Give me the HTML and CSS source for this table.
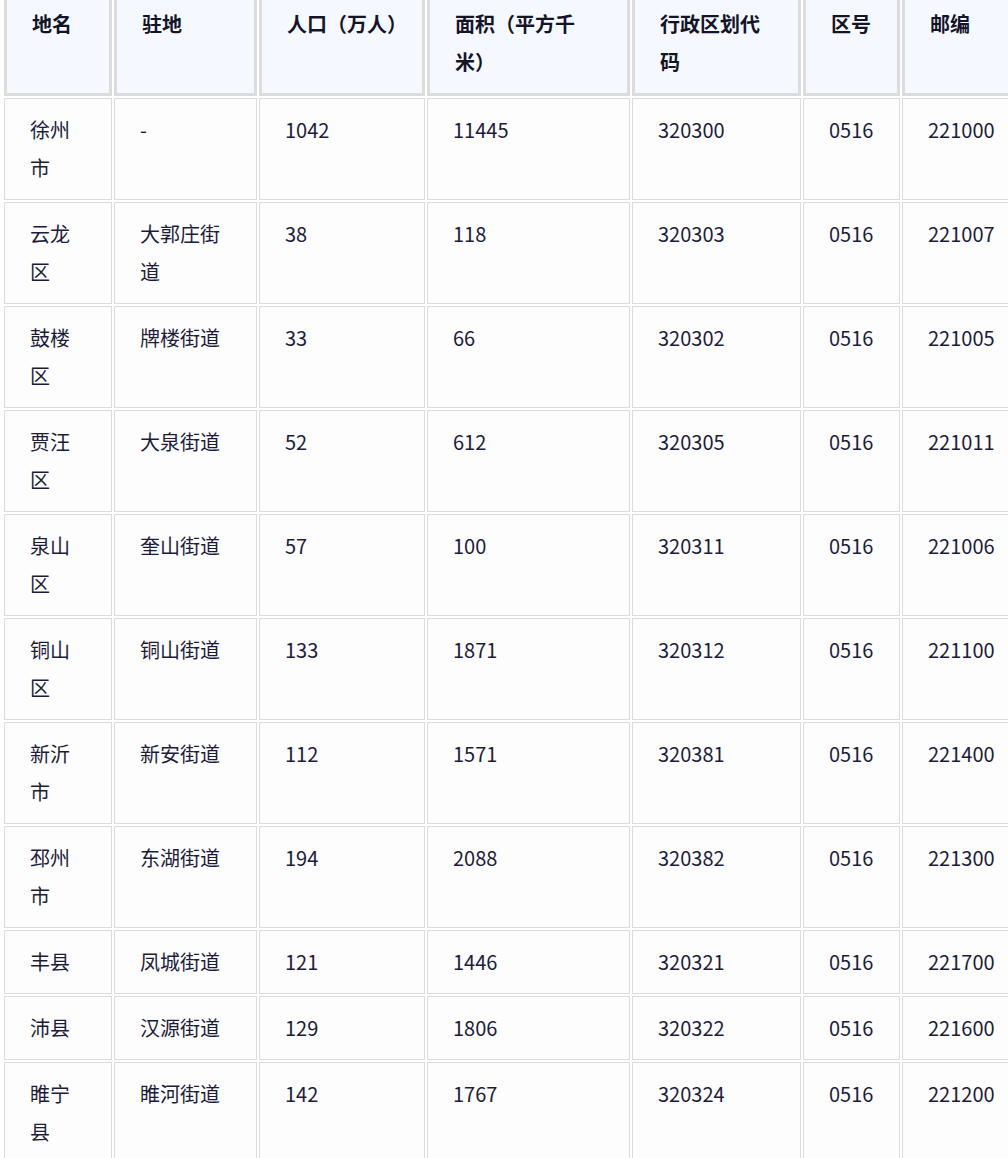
FILE: index.html
```html
<!DOCTYPE html>
<html lang="zh-CN">
<head>
<meta charset="utf-8">
<title>徐州市行政区划</title>
<link rel="stylesheet" href="styles.css">
</head>
<body>
<div class="table-wrap">
<table class="region-table">
  <colgroup>
    <col class="c1"><col class="c2"><col class="c3"><col class="c4"><col class="c5"><col class="c6"><col class="c7">
  </colgroup>
  <thead>
    <tr><th>地名</th><th>驻地</th><th>人口（万人）</th><th>面积（平方千米）</th><th>行政区划代码</th><th>区号</th><th>邮编</th></tr>
  </thead>
  <tbody>
    <tr><td>徐州市</td><td>-</td><td>1042</td><td>11445</td><td>320300</td><td>0516</td><td>221000</td></tr>
    <tr><td>云龙区</td><td>大郭庄街道</td><td>38</td><td>118</td><td>320303</td><td>0516</td><td>221007</td></tr>
    <tr><td>鼓楼区</td><td>牌楼街道</td><td>33</td><td>66</td><td>320302</td><td>0516</td><td>221005</td></tr>
    <tr><td>贾汪区</td><td>大泉街道</td><td>52</td><td>612</td><td>320305</td><td>0516</td><td>221011</td></tr>
    <tr><td>泉山区</td><td>奎山街道</td><td>57</td><td>100</td><td>320311</td><td>0516</td><td>221006</td></tr>
    <tr><td>铜山区</td><td>铜山街道</td><td>133</td><td>1871</td><td>320312</td><td>0516</td><td>221100</td></tr>
    <tr><td>新沂市</td><td>新安街道</td><td>112</td><td>1571</td><td>320381</td><td>0516</td><td>221400</td></tr>
    <tr><td>邳州市</td><td>东湖街道</td><td>194</td><td>2088</td><td>320382</td><td>0516</td><td>221300</td></tr>
    <tr><td>丰县</td><td>凤城街道</td><td>121</td><td>1446</td><td>320321</td><td>0516</td><td>221700</td></tr>
    <tr><td>沛县</td><td>汉源街道</td><td>129</td><td>1806</td><td>320322</td><td>0516</td><td>221600</td></tr>
    <tr><td>睢宁县</td><td>睢河街道</td><td>142</td><td>1767</td><td>320324</td><td>0516</td><td>221200</td></tr>
  </tbody>
</table>
</div>
</body>
</html>
```
FILE: styles.css
```css
html, body {
  margin: 0;
  padding: 0;
  background: #ffffff;
  overflow: hidden;
}

.table-wrap {
  overflow: hidden;
  width: 1008px;
}

.region-table {
  margin: -12px 0 0 2px;
  border-collapse: separate;
  border-spacing: 2px;
  table-layout: fixed;
  width: 1042px;
  font-family: "Noto Sans CJK SC", "Noto Sans", sans-serif;
  font-size: 20px;
  line-height: 38px;
  color: #1c1c3a;
}

.c1 { width: 108px; }
.c2 { width: 143px; }
.c3 { width: 166px; }
.c4 { width: 203px; }
.c5 { width: 169px; }
.c6 { width: 97px; }
.c7 { width: 140px; }

.region-table th,
.region-table td {
  box-sizing: border-box;
  padding: 12px 23px 12px 25px;
  text-align: left;
  vertical-align: top;
}

.region-table th {
  background: #f5f9ff;
  border: 3px solid #dcdcdc;
  font-weight: 700;
  color: #141428;
}

.region-table td {
  background: #fdfdfd;
  border: 1px solid #dcdcdc;
}
```
